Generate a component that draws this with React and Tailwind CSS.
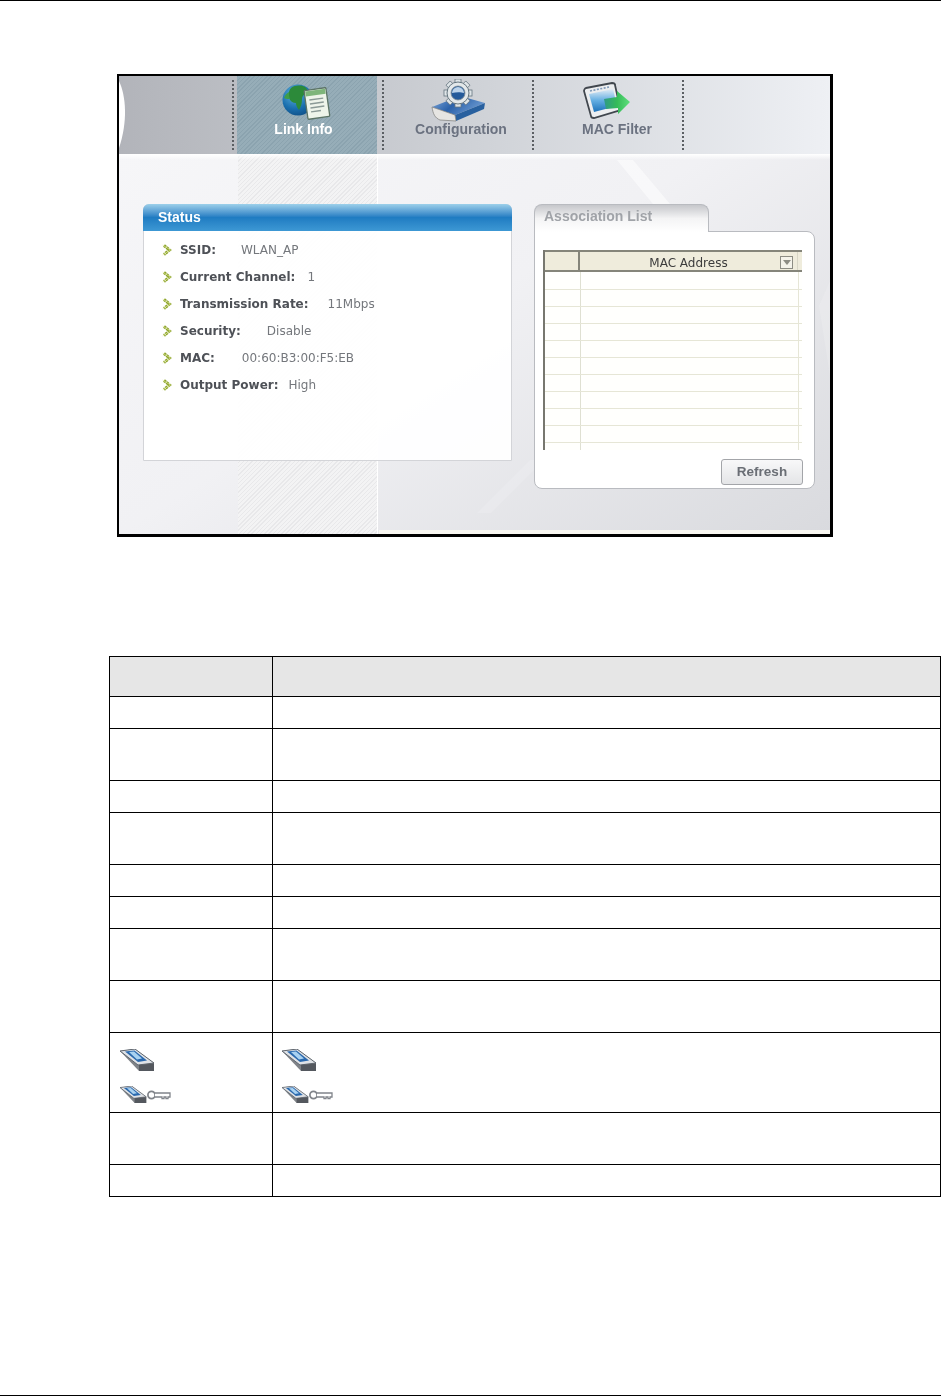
import React from 'react';

const statusRows = [
  { label: 'SSID:', value: 'WLAN_AP', gap: 'ml-[25px]' },
  { label: 'Current Channel:', value: '1', gap: 'ml-[12px]' },
  { label: 'Transmission Rate:', value: '11Mbps', gap: 'ml-[19px]' },
  { label: 'Security:', value: 'Disable', gap: 'ml-[26px]' },
  { label: 'MAC:', value: '00:60:B3:00:F5:EB', gap: 'ml-[27px]' },
  { label: 'Output Power:', value: 'High', gap: 'ml-[10px]' },
];

// row heights of the field table, from the ruled lines in the page
const tableRows = [
  { h: 'h-[32px]' },
  { h: 'h-[52px]' },
  { h: 'h-[32px]' },
  { h: 'h-[52px]' },
  { h: 'h-[32px]' },
  { h: 'h-[32px]' },
  { h: 'h-[52px]' },
  { h: 'h-[52px]' },
  { h: 'h-[80px]', icons: true },
  { h: 'h-[52px]' },
  { h: 'h-[32px]' },
];

function GlobeIcon() {
  return (
    <svg width="54" height="44" viewBox="0 0 54 44">
      <defs>
        <radialGradient id="globeBlue" cx="0.4" cy="0.3" r="0.8">
          <stop offset="0" stopColor="#5fb4e0" />
          <stop offset="0.6" stopColor="#1a6fae" />
          <stop offset="1" stopColor="#0d4a80" />
        </radialGradient>
      </defs>
      <circle cx="18" cy="21" r="15.5" fill="url(#globeBlue)" />
      <path d="M11 9c4-3 10-3 14-1 3 2 3 5 0 7-2 1-3 3-3 5 0 4-1 8-3 11-2-2-3-5-3-7-3 0-6-2-7-5-1-4 0-8 2-10z" fill="#2c8a3a" />
      <path d="M4 19c1-3 3-5 5-6 0 3 0 5 1 7-2 0-4 0-6-1z" fill="#3f9d48" />
      <g transform="rotate(-8 37 25)">
        <rect x="26" y="10" width="22" height="29" rx="1" fill="#eef4ea" stroke="#5c7466" strokeWidth="1.3" />
        <rect x="27" y="11" width="20" height="5" fill="#7eb57a" />
        <path d="M30 20h14M30 24h14M30 28h14M30 32h10" stroke="#8b9a96" strokeWidth="1.4" />
      </g>
    </svg>
  );
}

function GearIcon() {
  const teeth = [0, 45, 90, 135, 180, 225, 270, 315];
  return (
    <svg width="56" height="44" viewBox="0 0 56 44">
      <defs>
        <linearGradient id="slabBlue" x1="0" y1="0" x2="1" y2="0.4">
          <stop offset="0" stopColor="#86aede" />
          <stop offset="0.5" stopColor="#2c62aa" />
          <stop offset="1" stopColor="#6a98d0" />
        </linearGradient>
      </defs>
      <path d="M2 28 30 17 55 24 25 36z" fill="url(#slabBlue)" />
      <path d="M25 36 55 24 54 30 26 42z" fill="#28609f" />
      <path d="M2 28 25 36 26 42 10 41C5 39 3 35 2 28z" fill="#e6e5e2" stroke="#7a7a78" strokeWidth="0.7" />
      {teeth.map((deg) => (
        <rect key={deg} x="25" y="0" width="6" height="6" fill="#dfe5e8" stroke="#65757f" strokeWidth="0.8" transform={`rotate(${deg} 28 14)`} />
      ))}
      <circle cx="28" cy="14" r="11" fill="#e3e8ea" stroke="#65757f" strokeWidth="1" />
      <circle cx="28" cy="14" r="7" fill="#245a9a" stroke="#7d8c96" strokeWidth="0.8" />
      <path d="M22 14a6 6 0 0 1 12 0c-3-1-8-1-12 0z" fill="#bcd3ea" />
    </svg>
  );
}

function FilterIcon() {
  return (
    <svg width="48" height="44" viewBox="0 0 48 44">
      <defs>
        <linearGradient id="screenBlue" x1="0" y1="0" x2="0" y2="1">
          <stop offset="0" stopColor="#e4edf6" />
          <stop offset="0.5" stopColor="#63aee2" />
          <stop offset="1" stopColor="#1c72ba" />
        </linearGradient>
        <linearGradient id="arrowGreen" x1="0" y1="0" x2="1" y2="0">
          <stop offset="0" stopColor="#2f9a86" />
          <stop offset="0.5" stopColor="#35bb58" />
          <stop offset="1" stopColor="#5fe07c" />
        </linearGradient>
      </defs>
      <path d="M4 9 30 4c2 0 3 1 3 2l5 23c0 2-1 3-2 3L12 39c-2 0-3-1-3-2L2 12c0-1 1-3 2-3z" fill="#eceef0" stroke="#41474e" strokeWidth="1.8" />
      <path d="M7 15 31 10 35 27 12 33z" fill="url(#screenBlue)" />
      <path d="M8 12 27 8" stroke="#7f99b8" strokeWidth="1.6" strokeDasharray="2 1.5" />
      <path d="M22 20 35 18V12L48 23 36 35V29L24 30z" fill="url(#arrowGreen)" />
    </svg>
  );
}

function Chevron() {
  return (
    <svg width="10" height="12" viewBox="0 0 10 12" className="shrink-0">
      <path d="M2 1.5 7.5 6 2 10.5" fill="none" stroke="#8ea52c" strokeWidth="3" strokeDasharray="2.6 0.6" />
      <path d="M0.5 1 8.5 6 0.5 11" fill="none" stroke="#e6eba8" strokeWidth="0.6" />
    </svg>
  );
}

function CardIcon({ small }) {
  return (
    <svg width={small ? 27 : 35} height={small ? 17 : 22} viewBox="0 0 35 22">
      <path d="M0 2 15 0 34 14 34 22 19 22z" fill="#7f8388" />
      <path d="M0 2 15 0 34 14 18 16z" fill="#dfe2e6" stroke="#60676f" strokeWidth="1" />
      <path d="M5 2.5 14.5 1.5 27 11.5 18 13z" fill="#2a69ae" />
      <path d="M9 3 14 2.5 22 9.5 17 10.5z" fill="#a9d2f1" />
      <path d="M19 16 34 14.5 34 22 19 22z" fill="#54585e" />
    </svg>
  );
}

function KeyCardIcon() {
  return (
    <div className="flex items-center">
      <CardIcon small />
      <svg width="24" height="14" viewBox="0 0 24 14">
        <circle cx="4.5" cy="7" r="3.6" fill="#fff" stroke="#80848a" strokeWidth="1.7" />
        <path d="M8 5h15v4h-2v1.6h-2V9h-2v1.6h-2V9H8" fill="#fff" stroke="#80848a" strokeWidth="1.3" />
      </svg>
    </div>
  );
}

function Separator() {
  return <div className="w-0 h-[70px] self-center border-l-2 border-dotted border-[#5b5f63]" />;
}

function NavTab({ icon, label, active, className, labelClass }) {
  const tone = active
    ? 'text-white bg-[#8fa7b3] bg-[repeating-linear-gradient(135deg,#8ba3af_0,#8ba3af_1px,#96adb8_1px,#96adb8_3px)]'
    : 'text-[#6b7280]';
  return (
    <div className={`flex flex-col items-center h-full pt-[3px] ${tone} ${className}`}>
      <div className="h-[43px] flex items-center">{icon}</div>
      <span className={`font-['Liberation_Sans',sans-serif] font-bold text-[14px] leading-[16px] -mt-px ${labelClass}`}>{label}</span>
    </div>
  );
}

function StatusPanel() {
  return (
    <div className="w-[369px] h-[257px] flex flex-col bg-white/95 border border-[#d3d4d8] rounded-t-md relative z-10">
      <div className="h-[27px] -mx-px -mt-px pb-px rounded-t-md pl-[15px] flex items-center bg-gradient-to-b from-[#9cd0ea] via-[#1f7cc2] to-[#3d98d4] text-white font-['Liberation_Sans',sans-serif] font-bold text-[14px]">
        Status
      </div>
      <ul className="flex flex-col gap-[9px] pt-[10px] pl-[18px]">
        {statusRows.map((row) => (
          <li key={row.label} className="flex items-center h-[18px] font-['DejaVu_Sans',sans-serif] text-[12px]">
            <Chevron />
            <span className="ml-[8px] font-bold text-[#4e5157]">{row.label}</span>
            <span className={`${row.gap} text-[#74777c]`}>{row.value}</span>
          </li>
        ))}
      </ul>
    </div>
  );
}

function AssociationPanel() {
  return (
    <div className="w-[281px] flex flex-col relative z-10">
      <div className="w-[175px] h-[28px] -mb-px relative z-10 pl-[9px] pt-px rounded-t-lg border border-b-0 border-[#b9bbc0] bg-gradient-to-b from-[#c6c7cb] via-[#f4f4f5] to-white font-['Liberation_Sans',sans-serif] font-bold text-[14px] text-[#a0a3a8]">
        Association List
      </div>
      <div className="h-[258px] rounded-b-lg rounded-tr-lg border border-[#b9bbc0] bg-white pt-[18px] pl-[8px] pr-[12px]">
        <div className="w-[259px] h-[200px] border-l-2 border-[#77776f] bg-[#fffffd] flex flex-col overflow-hidden">
          <div className="h-[22px] shrink-0 flex bg-[#efecdc] border-y-2 border-[#85857a] font-['DejaVu_Sans',sans-serif] text-[12px] text-[#3c3c3c]">
            <div className="w-[35px] border-r-2 border-[#85857a]" />
            <div className="w-[218px] relative flex items-center justify-center pt-[3px] border-r border-[#d8d6c6]">
              MAC Address
              <div className="absolute right-[4px] top-[4px] w-[13px] h-[13px] border border-[#8d8d84] bg-[#f4f3ea] flex items-center justify-center">
                <div className="w-0 h-0 border-x-[4px] border-x-transparent border-t-[5px] border-t-[#8d8d84]" />
              </div>
            </div>
          </div>
          {Array.from({ length: 11 }).map((_, i) => (
            <div key={i} className={`shrink-0 flex border-b border-[#e6e6d6] ${i === 0 ? 'h-[18px]' : 'h-[17px]'}`}>
              <div className="w-[36px] border-r border-[#dfe0d2]" />
              <div className="w-[218px] border-r border-[#e6e6d6]" />
            </div>
          ))}
        </div>
        <div className="flex justify-end mt-[9px] -mr-px">
          <button className="w-[82px] h-[26px] rounded-[3px] border border-[#a3a5a9] bg-gradient-to-b from-[#f8f8f9] to-[#e4e5e7] font-['Liberation_Sans',sans-serif] font-bold text-[13.5px] text-[#6a6e75]">
            Refresh
          </button>
        </div>
      </div>
    </div>
  );
}

function Screenshot() {
  return (
    <div className="ml-[117px] mt-[73px] w-[716px] h-[463px] shrink-0 border-2 border-r-[3px] border-b-[3px] border-black">
      <div className="relative w-full h-full overflow-hidden blur-[0.6px] flex flex-col bg-gradient-to-br from-[#f7f7f9] via-[#f1f1f4] to-[#d9dade]">
        {/* hatched column running below the active tab */}
        <div className="absolute left-[119px] top-0 w-[140px] h-full bg-[repeating-linear-gradient(135deg,#e8e8ea_0,#e8e8ea_1px,#f3f3f4_1px,#f3f3f4_3px)] border-r border-white" />
        {/* pale swooshes of the page background */}
        <svg className="absolute inset-0" width="711" height="458" viewBox="0 0 711 458">
          <path d="M498 84 534 128 551 128 514 84z" fill="#ffffff" opacity="0.5" />
          <path d="M358 437 411 384 425 384 372 437z" fill="#ffffff" opacity="0.15" />
          <path d="M700 230 711 205 711 300z" fill="#ffffff" opacity="0.15" />
        </svg>
        <div className="absolute left-[260px] right-0 bottom-0 h-[4px] bg-[#f8f6f0]" />

        <nav className="relative z-10 h-[78px] shrink-0 flex items-center bg-gradient-to-r from-[#b2b4ba] via-[#cfd2d7] to-[#eef0f4]">
          <svg className="absolute left-0 top-0" width="12" height="78" viewBox="0 0 12 78">
            <path d="M0 5C7 20 9 45 0 72z" fill="#ffffff" />
          </svg>
          <div className="w-[113px] shrink-0" />
          <Separator />
          <NavTab active icon={<GlobeIcon />} label="Link Info" className="ml-[3px] w-[140px]" labelClass="-ml-[7px]" />
          <div className="ml-[5px]"><Separator /></div>
          <NavTab icon={<GearIcon />} label="Configuration" className="w-[148px]" labelClass="ml-[6px]" />
          <Separator />
          <NavTab icon={<FilterIcon />} label="MAC Filter" className="w-[148px] -translate-x-[2px]" labelClass="ml-[22px]" />
          <Separator />
        </nav>
        <div className="relative z-10 h-[6px] shrink-0 bg-gradient-to-b from-white to-white/0" />

        <div className="relative z-10 flex items-start gap-[22px] pl-[24px] pt-[44px]">
          <StatusPanel />
          <AssociationPanel />
        </div>
      </div>
    </div>
  );
}

function FieldTable() {
  return (
    <table className="ml-[109px] mt-[119px] w-[832px] table-fixed border-collapse shrink-0">
      <colgroup>
        <col className="w-[163px]" />
        <col />
      </colgroup>
      <thead>
        <tr>
          <th className="h-[40px] bg-[#e6e6e6] border border-black" />
          <th className="h-[40px] bg-[#e6e6e6] border border-black" />
        </tr>
      </thead>
      <tbody>
        {tableRows.map((row, i) => (
          <tr key={i}>
            {[0, 1].map((col) => (
              <td key={col} className={`${row.h} border border-black align-top`}>
                {row.icons && (
                  <div className={`flex flex-col gap-[15px] pt-[16px] ${col === 0 ? 'pl-[10px]' : 'pl-[9px]'}`}>
                    <CardIcon />
                    <KeyCardIcon />
                  </div>
                )}
              </td>
            ))}
          </tr>
        ))}
      </tbody>
    </table>
  );
}

export default function App() {
  return (
    <div className="w-[941px] h-[1396px] flex flex-col bg-white overflow-hidden">
      <div className="h-px shrink-0 bg-black" />
      <Screenshot />
      <FieldTable />
      <div className="mt-auto h-px shrink-0 bg-black" />
    </div>
  );
}
